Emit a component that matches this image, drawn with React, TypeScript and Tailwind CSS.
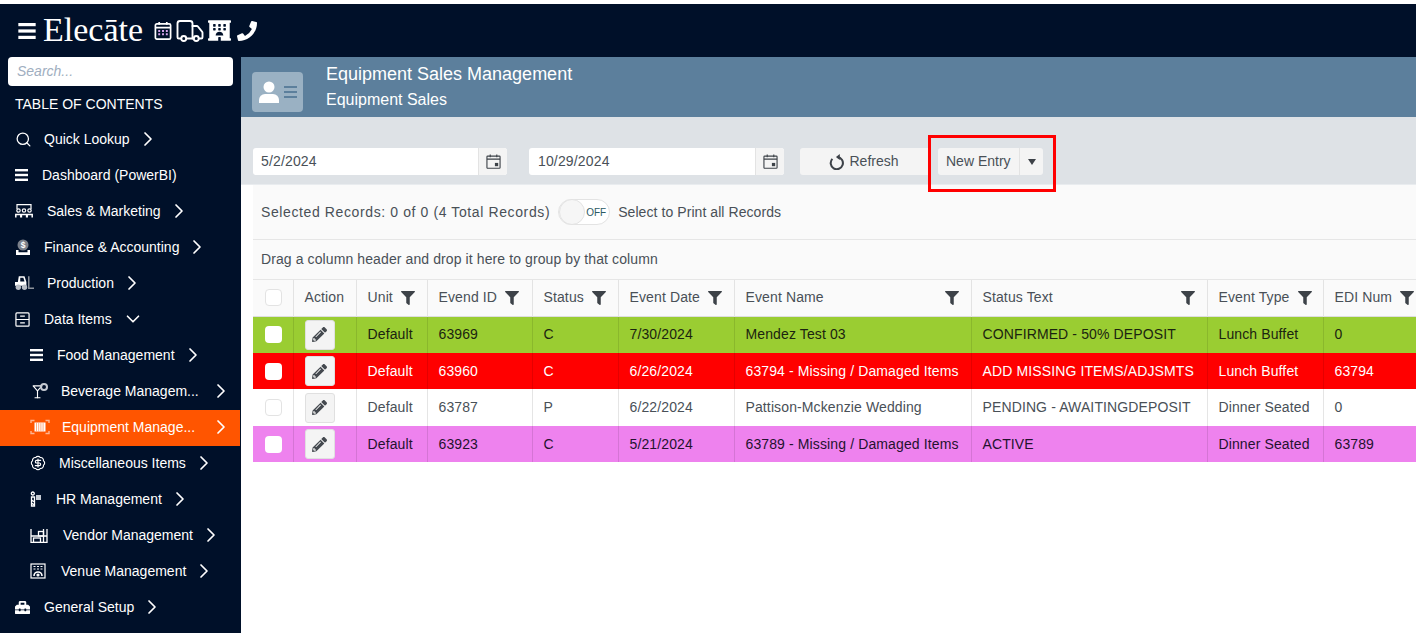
import React from 'react';
import { Search, Truck, ChevronRight, ChevronDown, BadgeDollarSign, Martini } from 'lucide-react';
import { FaFilter, FaPencilAlt, FaHotel, FaPhoneAlt, FaToolbox } from 'react-icons/fa';

const SalesIcon = () => (
  <svg viewBox="0 0 18 14" className="h-[14px] w-[18px]" fill="none" stroke="white" strokeWidth="1.2">
    <path d="M2 5V0.7h14V5" />
    <circle cx="3.5" cy="6.5" r="1.7" fill="none" />
    <circle cx="9" cy="6.5" r="1.7" fill="none" />
    <circle cx="14.5" cy="6.5" r="1.7" fill="none" />
    <path d="M0.8 13.5v-3h5v3M6.4 13.5v-3h5.2v3M12.2 13.5v-3h5v3" strokeWidth="1.5" />
  </svg>
);

const FinanceIcon = () => (
  <svg viewBox="0 0 16 16" className="h-[16px] w-[16px]" fill="white">
    <circle cx="8" cy="6" r="5.5" fill="#7a808a" />
    <text x="8" y="9" fontSize="8.5" fontWeight="700" textAnchor="middle" fill="white" fontFamily="Liberation Sans">$</text>
    <path d="M1 11h2.5v2.2h9V11H15v5H1z" />
  </svg>
);

const ForkliftIcon = () => (
  <svg viewBox="0 0 20 16" className="h-[16px] w-[19px]">
    <path d="M4 1h6l2 6v4H0V7h3z" fill="white" />
    <path d="M5.5 2.5h3.3l1.2 4H5.5z" fill="#001029" />
    <circle cx="3.5" cy="12.5" r="2.8" fill="#b9bec6" />
    <circle cx="10" cy="12.5" r="2.8" fill="#b9bec6" />
    <path d="M14.5 1v12.5H20" fill="none" stroke="#8d939c" strokeWidth="1.6" />
  </svg>
);

const CabinetIcon = () => (
  <svg viewBox="0 0 16 16" className="h-[15px] w-[15px]" fill="none" stroke="white" strokeWidth="1.3">
    <rect x="1" y="1" width="14" height="14" rx="1" />
    <path d="M1 8h14M5.5 4.5h5M5.5 11.5h5" />
  </svg>
);

const BarsIcon = ({ big }: { big?: boolean }) => (
  <svg viewBox="0 0 13 12" className={big ? 'h-[16px] w-[18px]' : 'h-[12px] w-[13px]'} fill="white">
    <rect width="13" height="2.4" />
    <rect y="4.8" width="13" height="2.4" />
    <rect y="9.6" width="13" height="2.4" />
  </svg>
);

const DrinkIcon = () => (
  <span className="relative block h-[16px] w-[18px]">
    <Martini size={15} strokeWidth={1.8} color="white" className="absolute left-0 top-px" />
    <span className="absolute right-0 top-0 h-[8px] w-[8px] rounded-full border-2 border-[#c5cad2]" />
  </span>
);

const BarcodeIcon = () => (
  <svg viewBox="0 0 20 16" className="h-[16px] w-[20px]" fill="none" stroke="#ffb591" strokeWidth="1.4">
    <path d="M1 4V1.5h3.5M15.5 1.5H19V4M1 12v2.5h3.5M15.5 14.5H19V12" />
    <path d="M4.5 3.5h11v9h-11z" fill="white" stroke="none" />
    <path d="M6.5 3.5v9M8.7 3.5v9M10.9 3.5v9M13.1 3.5v9" stroke="#ff9a66" strokeWidth="0.8" />
  </svg>
);

const HrIcon = () => (
  <svg viewBox="0 0 12 16" className="h-[16px] w-[12px]" fill="none" stroke="white" strokeWidth="1.3">
    <circle cx="2.8" cy="2.5" r="1.5" />
    <path d="M1.5 6h3v9h-3zM1.5 9l3 2M1.5 12l3 2" />
    <rect x="6" y="4" width="5" height="5" fill="#c5cad2" stroke="none" />
  </svg>
);

const VendorIcon = () => (
  <svg viewBox="0 0 18 15" className="h-[15px] w-[18px]" fill="none" stroke="white" strokeWidth="1.3">
    <path d="M1 1v14M17 1v14M1 8h16M1 14.4h16" />
    <path d="M13.5 1v13.5" />
    <rect x="8.5" y="3.5" width="5" height="4.5" />
    <rect x="3.5" y="10" width="7" height="4.5" />
  </svg>
);

const VenueIcon = () => (
  <svg viewBox="0 0 16 16" className="h-[16px] w-[16px]" fill="none" stroke="white" strokeWidth="1.2">
    <rect x="1" y="1" width="14" height="14" />
    <path d="M3.5 3.5h2M7 3.5h2M10.5 3.5h2M3.5 6h2M7 6h2M10.5 6h2" />
    <path d="M4 13a4 4 0 0 1 8 0" strokeWidth="1.6" />
    <circle cx="8" cy="12" r="1" fill="white" />
  </svg>
);

const navItems = [
  { label: 'Quick Lookup', icon: <Search size={17} strokeWidth={1.8} color="white" />, box: 'w-[29px]', chevron: true },
  { label: 'Dashboard (PowerBI)', icon: <BarsIcon />, box: 'w-[27px]' },
  { label: 'Sales & Marketing', icon: <SalesIcon />, box: 'w-[32px]', chevron: true },
  { label: 'Finance & Accounting', icon: <FinanceIcon />, box: 'w-[29px]', chevron: true },
  { label: 'Production', icon: <ForkliftIcon />, box: 'w-[32px]', chevron: true },
  { label: 'Data Items', icon: <CabinetIcon />, box: 'w-[29px]', open: true },
  { label: 'Food Management', icon: <BarsIcon />, box: 'w-[27px]', sub: true, chevron: true },
  { label: 'Beverage Managem...', icon: <DrinkIcon />, box: 'w-[31px]', sub: true, chevron: true, fixed: 'w-[148px]' },
  { label: 'Equipment Manage...', icon: <BarcodeIcon />, box: 'w-[32px]', sub: true, chevron: true, fixed: 'w-[147px]', active: true },
  { label: 'Miscellaneous Items', icon: <BadgeDollarSign size={16} strokeWidth={1.7} color="white" />, box: 'w-[29px]', sub: true, chevron: true },
  { label: 'HR Management', icon: <HrIcon />, box: 'w-[26px]', sub: true, chevron: true },
  { label: 'Vendor Management', icon: <VendorIcon />, box: 'w-[33px]', sub: true, chevron: true },
  { label: 'Venue Management', icon: <VenueIcon />, box: 'w-[31px]', sub: true, chevron: true },
  { label: 'General Setup', icon: <FaToolbox size={15} color="white" />, box: 'w-[29px]', chevron: true },
];

const columns = [
  { label: 'Unit', width: 'w-[71px]', wide: false },
  { label: 'Evend ID', width: 'w-[105px]', wide: false },
  { label: 'Status', width: 'w-[86px]', wide: false },
  { label: 'Event Date', width: 'w-[116px]', wide: false },
  { label: 'Event Name', width: 'w-[237px]', wide: true },
  { label: 'Status Text', width: 'w-[236px]', wide: true },
  { label: 'Event Type', width: 'w-[116px]', wide: false },
  { label: 'EDI Num', width: 'w-[93px]', wide: false },
];

const rows = [
  { height: 'h-[37px]', tone: 'bg-[#9acd32] text-[#1b2410]', box: 'border-transparent', cells: ['Default', '63969', 'C', '7/30/2024', 'Mendez Test 03', 'CONFIRMED - 50% DEPOSIT', 'Lunch Buffet', '0'] },
  { height: 'h-[36px]', tone: 'bg-[#ff0000] text-white', box: 'border-transparent', cells: ['Default', '63960', 'C', '6/26/2024', '63794 - Missing / Damaged Items', 'ADD MISSING ITEMS/ADJSMTS', 'Lunch Buffet', '63794'] },
  { height: 'h-[37px]', tone: 'bg-white text-[#495057]', box: 'border-[#e3e3e3]', cells: ['Default', '63787', 'P', '6/22/2024', 'Pattison-Mckenzie Wedding', 'PENDING - AWAITINGDEPOSIT', 'Dinner Seated', '0'] },
  { height: 'h-[36px]', tone: 'bg-[#ee82ee] text-[#24122e]', box: 'border-transparent', cells: ['Default', '63923', 'C', '5/21/2024', '63789 - Missing / Damaged Items', 'ACTIVE', 'Dinner Seated', '63789'] },
];

const CalendarGlyph = () => (
  <svg viewBox="0 0 16 16" className="h-[15px] w-[15px]" fill="none" stroke="#3d4248" strokeWidth="1.2">
    <rect x="1" y="2.2" width="14" height="13" rx="0.8" />
    <path d="M1 5.5h14M4.5 0.5v3M11.5 0.5v3" />
    <rect x="9.5" y="9.5" width="3.5" height="3.5" fill="#3d4248" stroke="none" />
  </svg>
);

const DateField = ({ value, width, pad }: { value: string; width: string; pad: string }) => (
  <div className={`flex h-[27px] ${width} overflow-hidden rounded-[3px] bg-white`}>
    <div className={`flex-1 ${pad} text-[14px] leading-[27px] tracking-[0.15px] text-[#495057]`}>{value}</div>
    <div className="flex w-[29px] items-center justify-center border-l border-[#e3e3e3] bg-[#f4f4f4]">
      <CalendarGlyph />
    </div>
  </div>
);

const App: React.FC = () => {
  return (
    <div className="relative h-[633px] w-[1416px] overflow-hidden bg-white pt-[4px] font-['Liberation_Sans',Arial,sans-serif]">
      {/* top bar */}
      <div className="flex h-[53px] items-center bg-[#001029] pl-[18px] text-white">
        <BarsIcon big />
        <span className="ml-[7px] -mt-[2px] font-['Liberation_Serif',serif] text-[34px] leading-none">Elecāte</span>
        <div className="ml-[11px] flex items-center">
          <svg viewBox="0 0 18 20" className="h-[19px] w-[18px]" fill="none" stroke="white" strokeWidth="1.8">
            <rect x="1" y="3" width="16" height="16" rx="1.5" />
            <path d="M1 7h16M5 1v3M13 1v3" />
            <path d="M4 10.5h2M8 10.5h2M12 10.5h2M4 14h2M8 14h2M12 14h2" stroke="#d9a6f0" strokeWidth="2" />
          </svg>
          <Truck size={30} strokeWidth={1.5} className="ml-[3px]" />
          <FaHotel size={23} className="ml-[3px]" />
          <FaPhoneAlt size={20} className="ml-[6px] -scale-x-100" />
        </div>
      </div>

      <div className="flex">
        {/* sidebar */}
        <aside className="h-[576px] w-[241px] shrink-0 bg-[#001029] text-white">
          <div className="px-[8px]">
            <div className="h-[29px] rounded-[4px] bg-white pl-[9px] text-[14px] italic leading-[29px] text-[#a0aec0]">Search...</div>
          </div>
          <div className="h-[36px] pl-[15px] text-[14px] leading-[36px]">TABLE OF CONTENTS</div>
          <nav>
            {navItems.map((item) => (
              <div
                key={item.label}
                className={`flex h-[36px] w-[240px] items-center pb-[2px] text-[14px] ${item.sub ? 'pl-[30px]' : 'pl-[15px]'} ${item.active ? 'bg-[#ff5500]' : ''}`}
              >
                <span className={`flex shrink-0 items-center ${item.box}`}>{item.icon}</span>
                <span className={`whitespace-nowrap ${item.fixed ?? ''}`}>{item.label}</span>
                {item.chevron && <ChevronRight size={24} strokeWidth={1.7} className={item.fixed ? '' : 'ml-[6px]'} />}
                {item.open && <ChevronDown size={22} strokeWidth={1.8} className="ml-[10px]" />}
              </div>
            ))}
          </nav>
        </aside>

        {/* main */}
        <main className="h-[576px] min-w-0 flex-1 bg-white">
          <div className="flex h-[60px] bg-[#5c7f9c] pl-[11px] text-white">
            <div className="mt-[15px] flex h-[40px] w-[51px] items-center justify-center gap-[4px] rounded-[4px] bg-[#9ab1c3]">
              <svg viewBox="0 0 22 22" className="h-[22px] w-[22px]" fill="white">
                <circle cx="11" cy="6" r="5.5" />
                <path d="M1 22v-3a6 6 0 0 1 6-6h8a6 6 0 0 1 6 6v3z" />
              </svg>
              <div className="flex flex-col gap-[3px]">
                <span className="h-[2px] w-[13px] bg-[#5c7f9c]" />
                <span className="h-[2px] w-[13px] bg-[#5c7f9c]" />
                <span className="h-[2px] w-[13px] bg-[#5c7f9c]" />
              </div>
            </div>
            <div className="ml-[23px] pt-[6px]">
              <div className="text-[18px] leading-[22px]">Equipment Sales Management</div>
              <div className="mt-[5px] text-[16px] leading-[20px]">Equipment Sales</div>
            </div>
          </div>

          <div className="h-[68px] border-b border-[#e9ecef] bg-[#dee2e6] pl-[12px] pt-[31px]">
            <div className="flex items-center">
              <DateField value="5/2/2024" width="w-[254px]" pad="pl-[8px]" />
              <div className="ml-[22px]">
                <DateField value="10/29/2024" width="w-[255px]" pad="pl-[9px]" />
              </div>
              <div className="ml-[16px] flex h-[27px] w-[130px] items-center justify-center gap-[5px] rounded-l-[3px] bg-[#f4f4f4] pr-[2px] text-[14px] text-[#495057]">
                <svg viewBox="0 0 16 17" className="h-[16px] w-[15px]" fill="none" stroke="#3d4248" strokeWidth="2.2">
                  <path d="M3.6 5.2a6.5 6.5 0 1 0 5.4-2" />
                  <path d="M11.5 0v6.4L7.4 3.2z" fill="#3d4248" stroke="none" />
                </svg>
                Refresh
              </div>
              <div className="ml-[8px] flex h-[27px] items-center rounded-[3px] bg-[#f4f4f4] text-[14px] text-[#495057]">
                <span className="w-[82px] border-r border-[#e3e3e3] pl-[8px] leading-[27px]">New Entry</span>
                <span className="flex w-[23px] items-center justify-center">
                  <svg viewBox="0 0 8 6" className="h-[6px] w-[8px]" fill="#3d4248">
                    <path d="M0 0h8L4 6z" />
                  </svg>
                </span>
              </div>
            </div>
          </div>

          <div className="ml-[12px]">
            <div className="flex h-[55px] items-center border-b border-[#e6e6e6] bg-[#fafafa] pl-[8px] text-[14px] text-[#495057]">
              <span className="tracking-[0.61px]">Selected Records: 0 of 0 (4 Total Records)</span>
              <span className="ml-[8px] flex h-[26px] w-[52px] items-center rounded-full border border-[#e3e3e3] bg-white">
                <span className="h-[26px] w-[26px] rounded-full border border-[#e3e3e3] bg-[#f6f6f6]" />
                <span className="ml-[1px] text-[10px] text-[#2b5a63]">OFF</span>
              </span>
              <span className="ml-[8px] tracking-[0.07px]">Select to Print all Records</span>
            </div>
            <div className="flex h-[40px] items-center border-b border-[#e6e6e6] bg-[#fafafa] pl-[8px] text-[14px] tracking-[0.1px] text-[#495057]">
              Drag a column header and drop it here to group by that column
            </div>

            <table className="w-[1163px] table-fixed border-collapse text-[14px] tracking-[0.12px]">
              <thead>
                <tr className="h-[36px] border-b border-[#dedede] bg-[#fafafa] text-left text-[#495057]">
                  <th className="w-[40px] border-r border-[#e3e3e3] pl-[12px] font-normal">
                    <span className="block h-[17px] w-[17px] rounded-[4px] border border-[#e3e3e3] bg-white" />
                  </th>
                  <th className="w-[63px] border-r border-[#e3e3e3] pl-[11px] font-normal">Action</th>
                  {columns.map((col) => (
                    <th key={col.label} className={`${col.width} border-r border-[#e3e3e3] pl-[11px] font-normal last:border-r-0 ${col.wide ? 'pr-[12px]' : 'pr-[4px]'}`}>
                      <div className={`flex items-center gap-[8px] ${col.wide ? 'justify-between' : ''}`}>
                        <span className="whitespace-nowrap">{col.label}</span>
                        <FaFilter size={14} color="#3d4248" className="shrink-0" />
                      </div>
                    </th>
                  ))}
                </tr>
              </thead>
              <tbody>
                {rows.map((row) => (
                  <tr key={row.cells[1]} className={`${row.height} ${row.tone}`}>
                    <td className="border-r border-black/10 pl-[12px]">
                      <span className={`block h-[17px] w-[17px] rounded-[4px] border bg-white ${row.box}`} />
                    </td>
                    <td className="border-r border-black/10 pl-[11px]">
                      <span className="flex h-[30px] w-[30px] items-center justify-center rounded-[3px] border border-[#e0e0e0] bg-[#f4f4f4]">
                        <FaPencilAlt size={15} color="#44494f" />
                      </span>
                    </td>
                    {row.cells.map((cell, i) => (
                      <td key={i} className="whitespace-nowrap border-r border-black/10 pl-[11px] last:border-r-0">
                        {cell}
                      </td>
                    ))}
                  </tr>
                ))}
              </tbody>
            </table>
          </div>
        </main>
      </div>

      {/* annotation box drawn over the screenshot */}
      <div className="absolute left-[928px] top-[135px] h-[57px] w-[128px] border-[3px] border-[#ff0000]" />
    </div>
  );
};

export default App;
